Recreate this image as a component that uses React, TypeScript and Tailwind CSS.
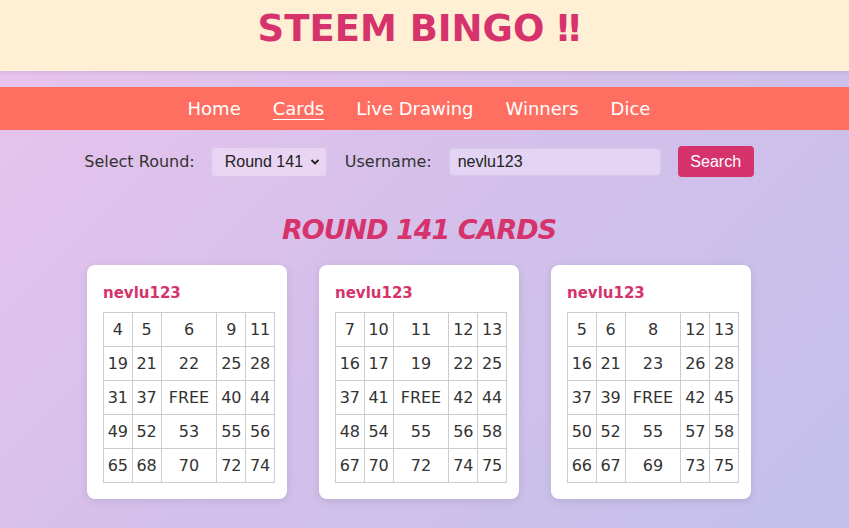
const cards: (number | string)[][][] = [
  [
    [4, 5, 6, 9, 11],
    [19, 21, 22, 25, 28],
    [31, 37, "FREE", 40, 44],
    [49, 52, 53, 55, 56],
    [65, 68, 70, 72, 74],
  ],
  [
    [7, 10, 11, 12, 13],
    [16, 17, 19, 22, 25],
    [37, 41, "FREE", 42, 44],
    [48, 54, 55, 56, 58],
    [67, 70, 72, 74, 75],
  ],
  [
    [5, 6, 8, 12, 13],
    [16, 21, 23, 26, 28],
    [37, 39, "FREE", 42, 45],
    [50, 52, 55, 57, 58],
    [66, 67, 69, 73, 75],
  ],
];

const navItems = ["Home", "Cards", "Live Drawing", "Winners", "Dice"];

function BingoCard({ rows }: { rows: (number | string)[][] }) {
  return (
    <div className="w-[200px] rounded-lg bg-white pt-[18px] pr-3 pb-4 pl-4 shadow-[0_2px_8px_rgba(0,0,0,0.1)]">
      <div className="mb-[9px] text-[15px] font-bold leading-5 text-[#d6336c]">nevlu123</div>
      <table className="w-[172px] border-collapse text-[16px] text-[#333]">
        <tbody>
          {rows.map((row, i) => (
            <tr key={i}>
              {row.map((cell, j) => (
                <td
                  key={j}
                  className="h-[34px] border border-[#ccc] px-0 text-center"
                >
                  {cell}
                </td>
              ))}
            </tr>
          ))}
        </tbody>
      </table>
    </div>
  );
}

export default function App() {
  return (
    <div className="min-h-screen bg-[linear-gradient(135deg,#eac3ee_0%,#d3c0ea_50%,#c2c0eb_100%)] font-['Comic_Sans_MS','DejaVu_Sans',sans-serif]">
      <header className="flex h-[71px] items-start justify-center bg-[#ffefd5] pt-[6px] pr-[11px] shadow-[0_2px_4px_rgba(0,0,0,0.08)]">
        <h1 className="text-[37px] font-bold leading-[46px] text-[#d6336c]">STEEM BINGO ‼</h1>
      </header>

      <nav className="mt-4 flex h-[43px] items-center justify-center gap-8 bg-[#ff6f61] pr-[11px] text-[18px] text-white">
        {navItems.map((item) => (
          <span key={item} className={item === "Cards" ? "underline underline-offset-4" : ""}>
            {item}
          </span>
        ))}
      </nav>

      <div className="mt-4 flex items-center justify-center pr-[11px] text-[16px] text-[#333]">
        <span>Select Round:</span>
        <div className="ml-4 flex h-[30px] w-[116px] items-center justify-between rounded border border-[#d7c8e6] bg-[#e9d5f3] pl-[13px] pr-[6px] font-['Liberation_Sans',sans-serif] text-[16px] text-[#222]">
          <span>Round 141</span>
          <svg width="10" height="8" viewBox="0 0 10 8" className="mt-[1px]">
            <path d="M1.5 2 L5 5.5 L8.5 2" fill="none" stroke="#222" strokeWidth="1.8" />
          </svg>
        </div>
        <span className="ml-[18px]">Username:</span>
        <div className="ml-[17px] flex h-[28px] w-[212px] items-center rounded border border-[#d5c7e6] bg-[#e3d3f4] pl-2 font-['Liberation_Sans',sans-serif] text-[16px] text-[#222]">
          nevlu123
        </div>
        <button className="ml-[17px] h-[31px] w-[76px] rounded bg-[#d6336c] font-['Liberation_Sans',sans-serif] text-[16px] text-white">
          Search
        </button>
      </div>

      <h2 className="mt-[33px] pr-[11px] text-center text-[27px] font-bold italic leading-[40px] tracking-[-1px] text-[#d6336c]">
        ROUND 141 CARDS
      </h2>

      <div className="mt-[15px] flex justify-center gap-8 pr-[11px] pb-10">
        {cards.map((rows, i) => (
          <BingoCard key={i} rows={rows} />
        ))}
      </div>
    </div>
  );
}
